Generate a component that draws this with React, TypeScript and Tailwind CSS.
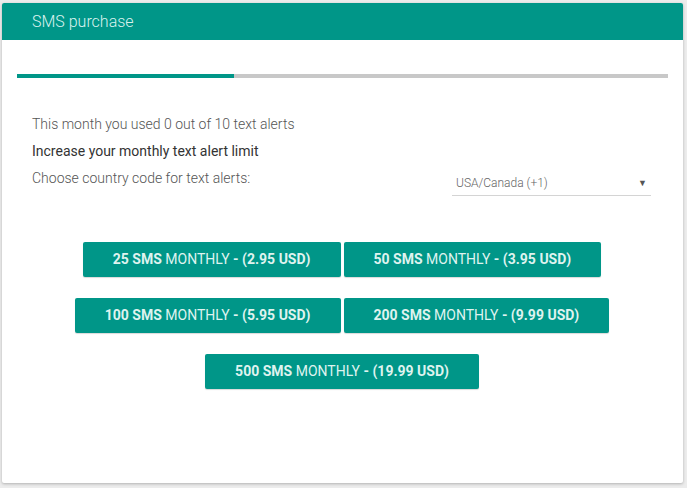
const plans = [
  [
    { sms: 25, price: "2.95" },
    { sms: 50, price: "3.95" },
  ],
  [
    { sms: 100, price: "5.95" },
    { sms: 200, price: "9.99" },
  ],
  [{ sms: 500, price: "19.99" }],
];

function PlanButton({ sms, price }: { sms: number; price: string }) {
  return (
    <button className="h-[35px] rounded-[2px] bg-[#009688] px-[30px] text-[14px] text-[#dff3ef] shadow-[0_1px_1px_rgba(0,0,0,0.15)] whitespace-nowrap">
      <span className="font-bold">{sms} SMS</span>{" "}
      <span className="font-normal">MONTHLY</span>{" "}
      <span className="font-bold">- ({price} USD)</span>
    </button>
  );
}

export default function App() {
  return (
    <div
      className="w-[687px] h-[488px] bg-[#ececec] pt-[3px] pl-[2px] pr-[4px] pb-[5px]"
      style={{ fontFamily: "Roboto, 'Liberation Sans', sans-serif" }}
    >
      <div className="flex h-full flex-col overflow-hidden rounded-[2px] bg-white shadow-[0_1px_3px_rgba(0,0,0,0.25)]">
        <div className="flex h-[37px] items-center bg-[#009688] pl-[30px] text-[16px] font-light text-[#d9f2ee]">
          SMS purchase
        </div>

        <div className="mx-[15px] mt-[34px] flex h-[4px] bg-[#c8c8c8]">
          <div className="h-full w-1/3 bg-[#009688]" />
        </div>

        <div className="mt-[33px] pl-[30px] pr-[32px] text-[14px]">
          <p className="leading-[27px] font-light text-[#555]">
            This month you used 0 out of 10 text alerts
          </p>
          <p className="leading-[27px] text-[#333]">
            Increase your monthly text alert limit
          </p>
          <div className="flex items-start justify-between">
            <p className="leading-[27px] font-light text-[#555]">
              Choose country code for text alerts:
            </p>
            <div className="mt-[10px] flex w-[199px] items-center justify-between border-b border-[#d4d4d4] pb-[4px] pl-[4px] pr-[4px] text-[12px] leading-[16px]">
              <span className="font-light text-[#666]">USA/Canada (+1)</span>
              <span className="text-[9px] text-[#555]">▼</span>
            </div>
          </div>
        </div>

        <div className="mt-[46px] flex flex-col items-center gap-[21px] pr-[1px]">
          {plans.map((row, i) => (
            <div key={i} className="flex gap-[3px]">
              {row.map((p) => (
                <PlanButton key={p.sms} sms={p.sms} price={p.price} />
              ))}
            </div>
          ))}
        </div>
      </div>
    </div>
  );
}
